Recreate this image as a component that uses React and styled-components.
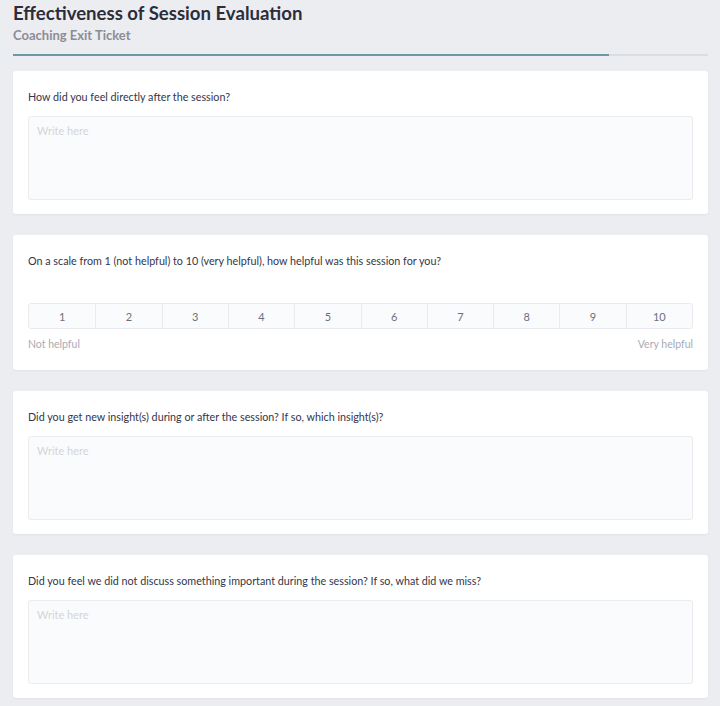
import React from 'react';
import styled, { createGlobalStyle } from 'styled-components';

const GlobalStyle = createGlobalStyle`
    html, body {
        margin: 0;
        padding: 0;
        background: #ecedf1;
    }
    body {
        font-family: Lato, "Noto Sans", "Liberation Sans", sans-serif;
        color: #2f3040;
    }
    * { box-sizing: border-box; }
`;

const Page = styled.div`
    width: 720px;
    min-height: 706px;
    padding: 0 12px 10px 13px;
    background: #ecedf1;
`;

const Header = styled.header`
    padding-top: 2px;
`;

const Title = styled.h1`
    margin: 0;
    font-size: 18.6px;
    line-height: 22px;
    font-weight: 700;
    color: #2c2d3c;
`;

const Subtitle = styled.h2`
    margin: 3px 0 0;
    font-size: 13px;
    line-height: 16px;
    font-weight: 700;
    color: #8b8c96;
`;

const Progress = styled.div`
    margin-top: 11px;
    height: 2px;
    background: #dcdde2;
`;

const ProgressFill = styled.div`
    height: 100%;
    background: #7097a6;
`;

const Cards = styled.div`
    display: flex;
    flex-direction: column;
    gap: 21px;
    margin-top: 15px;
`;

const Card = styled.section`
    background: #ffffff;
    border-radius: 3px;
    box-shadow: 0 1px 2px rgba(40, 45, 70, 0.05);
    padding: 18px 15px ${(props) => props.bottom || 14}px;
`;

const Question = styled.p`
    margin: 0;
    font-size: 10.75px;
    line-height: 15px;
    color: #33354a;
`;

const Answer = styled.textarea`
    display: block;
    width: 100%;
    height: 84px;
    margin-top: 12px;
    padding: 6px 8px;
    resize: none;
    font-family: inherit;
    font-size: 11px;
    line-height: 15px;
    background: #fafbfd;
    border: 1px solid #e9ebef;
    border-radius: 3px;
    outline: none;
    color: #383a4a;

    &::placeholder {
        color: #d3d5db;
    }
`;

const Scale = styled.div`
    display: grid;
    grid-template-columns: repeat(10, 1fr);
    margin-top: 35px;
    border: 1px solid #e9ebef;
    border-radius: 3px;
    background: #fafbfd;
    overflow: hidden;
`;

const ScaleCell = styled.button`
    height: 24px;
    padding: 0;
    border: none;
    border-left: ${(props) => (props.first ? 'none' : '1px solid #e9ebef')};
    background: transparent;
    font-family: inherit;
    font-size: 11px;
    color: #6d6f7c;
    cursor: pointer;
`;

const ScaleLabels = styled.div`
    display: flex;
    justify-content: space-between;
    margin-top: 8px;
    font-size: 10.5px;
    line-height: 14px;
    color: #a9abb4;
`;

const TextQuestion = ({ text }) => (
    <Card>
        <Question>{text}</Question>
        <Answer placeholder="Write here" />
    </Card>
);

const ScaleQuestion = ({ text }) => (
    <Card bottom={19}>
        <Question>{text}</Question>
        <Scale>
            {[1, 2, 3, 4, 5, 6, 7, 8, 9, 10].map((n) => (
                <ScaleCell key={n} first={n === 1}>{n}</ScaleCell>
            ))}
        </Scale>
        <ScaleLabels>
            <span>Not helpful</span>
            <span>Very helpful</span>
        </ScaleLabels>
    </Card>
);

const App = () => (
    <Page>
        <GlobalStyle />
        <Header>
            <Title>Effectiveness of Session Evaluation</Title>
            <Subtitle>Coaching Exit Ticket</Subtitle>
            <Progress>
                <ProgressFill style={{ width: '85.8%' }} />
            </Progress>
        </Header>
        <Cards>
            <TextQuestion text="How did you feel directly after the session?" />
            <ScaleQuestion text="On a scale from 1 (not helpful) to 10 (very helpful), how helpful was this session for you?" />
            <TextQuestion text="Did you get new insight(s) during or after the session? If so, which insight(s)?" />
            <TextQuestion text="Did you feel we did not discuss something important during the session? If so, what did we miss?" />
        </Cards>
    </Page>
);

export default App;
